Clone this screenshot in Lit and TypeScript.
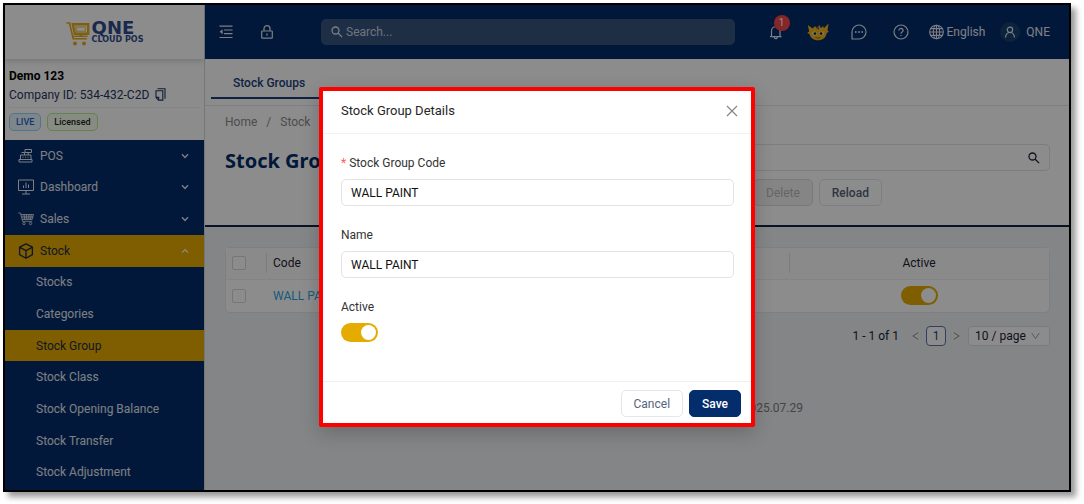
import { LitElement, html, css, svg } from "lit";
import { customElement, property } from "lit/decorators.js";

const icons: Record<string, unknown> = {
  pos: svg`<svg width="15" height="14" viewBox="0 0 15 14" fill="none" stroke="currentColor"><path d="M7 .5h6.500v3H7zM10.200 3.500v2.500M3.500 3.500h3v2.500M2.500 6h10.500v4.500H2.500zM1 10.500h13v2.500H1zM4.500 8.200h1M7 8.200h1M9.500 8.200h1"/></svg>`,
  dashboard: svg`<svg width="16" height="16" viewBox="0 0 16 16" fill="none" stroke="currentColor"><path d="M.5 1v10.500h15V1zM8 11.500V15M4 15h8M5.500 9V6.500M8 9V3.500M10.500 9V5.500"/></svg>`,
  sales: svg`<svg width="16" height="14" viewBox="0 0 16 14" fill="none" stroke="currentColor" stroke-width=".8"><path d="M.3 1h2.200l2 8.300h9.800M3 2.500h12.500l-1.300 5H4.200M3.500 4.200H15M3.900 5.900h10.600M6 2.500l.8 5M8.400 2.500l.3 5M10.800 2.500l-.1 5M13.200 2.500l-.7 5"/><circle cx="6" cy="11.500" r="1.200"/><circle cx="12.500" cy="11.500" r="1.200"/></svg>`,
  stock: svg`<svg width="16" height="16" viewBox="0 0 16 16" fill="none" stroke="currentColor" stroke-width="1.300" stroke-linejoin="round"><path d="M8 .9l6.400 3.300v7.400L8 15.200l-6.400-3.600V4.200zM1.800 4.400L8 7.600l6.200-3.200M8 7.600v7.400"/></svg>`,
  down: svg`<svg width="8" height="6" viewBox="0 0 8 6" fill="none" stroke="currentColor" stroke-width="1.400"><path d="M1 1.200L4 4.400l3-3.200"/></svg>`,
  up: svg`<svg width="8" height="6" viewBox="0 0 8 6" fill="none" stroke="currentColor" stroke-width="1.200"><path d="M1 4.600L4 1.600l3 3"/></svg>`,
  fold: svg`<svg width="14" height="14" viewBox="0 0 14 14" fill="none" stroke="currentColor" stroke-width="1.200"><path d="M.5 1.200h13M5 5h8.500M5 8.700h8.500M.5 12.500h13"/><path d="M3.600 4.300v5L.6 6.800z" fill="currentColor" stroke="none"/></svg>`,
  lock: svg`<svg width="12" height="14" viewBox="0 0 12 14" fill="none" stroke="currentColor" stroke-width="1.200"><rect x=".7" y="6" width="10.600" height="7.200" rx=".6"/><path d="M3 6V3.600a3 3 0 0 1 6 0V6M6 8.600v2.200"/></svg>`,
  search: svg`<svg width="12" height="12" viewBox="0 0 12 12" fill="none" stroke="currentColor" stroke-width="1.300"><circle cx="4.500" cy="4.500" r="3.500"/><path d="M7.200 7.200l3.900 3.900"/></svg>`,
  bell: svg`<svg width="14" height="16" viewBox="0 0 14 16" fill="none" stroke="currentColor" stroke-width="1.200"><path d="M1 12.700h11.500M2.500 12.700V7a4.200 4.200 0 0 1 8.500 0v5.700M6.700 2.800V1.500M5.300 13.200a1.500 1.500 0 0 0 3 0"/></svg>`,
  mascot: svg`<svg width="22" height="18" viewBox="0 0 22 18"><path d="M.8 2l4.700 3.400L8 3.200l2 1.900L12.500 2l1.200 3 2.600-1.800.6 2L21.500.6 20.500 7.300l1.300 1.200-2.200 1.700C19 14.500 15.500 17.300 11 17.300S3.200 14.500 2.500 11L.2 10l2-1.500z" fill="#eeb51c"/><path d="M9 3.300l1.500 2.200 1.800-2.500-.4 3.300H10z" fill="#7a3f6a"/><ellipse cx="7.600" cy="10.600" rx="2.400" ry="2" fill="#f7eccb"/><ellipse cx="14.400" cy="10.600" rx="2.400" ry="2" fill="#f7eccb"/><circle cx="7.900" cy="10.600" r="1.400" fill="#222"/><circle cx="14.100" cy="10.600" r="1.400" fill="#222"/><path d="M8.500 14.400q2.500 1.800 5 0" stroke="#a06a00" fill="none"/></svg>`,
  chat: svg`<svg width="16" height="16" viewBox="0 0 16 16" fill="none" stroke="currentColor" stroke-width="1.200"><path d="M1 15V8a7 7 0 1 1 7 7z"/><g fill="currentColor" stroke="none"><circle cx="4.800" cy="8" r=".9"/><circle cx="8" cy="8" r=".9"/><circle cx="11.200" cy="8" r=".9"/></g></svg>`,
  help: svg`<svg width="16" height="16" viewBox="0 0 16 16" fill="none" stroke="currentColor" stroke-width="1.200"><circle cx="8" cy="8" r="7"/><path d="M5.900 6.400a2.100 2 0 1 1 3.200 1.700C8.300 8.600 8 8.900 8 9.800"/><path d="M8 10.900v1.200" stroke-width="1.300"/></svg>`,
  globe: svg`<svg width="15" height="16" viewBox="0 0 15 16" fill="none" stroke="currentColor" stroke-width="1.100"><circle cx="7.500" cy="8" r="6.800"/><ellipse cx="7.500" cy="8" rx="3.200" ry="6.800"/><path d="M7.500 1.200v13.600M.7 8h13.600M1.600 4.600h11.800M1.600 11.400h11.800"/></svg>`,
  user: svg`<svg width="12" height="12" viewBox="0 0 12 12" fill="none" stroke="currentColor" stroke-width="1.200"><circle cx="6" cy="3.800" r="2.700"/><path d="M1.500 11.500c.3-3 2.200-5 4.500-5s4.200 2 4.500 5"/></svg>`,
  copy: svg`<svg width="11" height="13" viewBox="0 0 11 13" fill="none" stroke="currentColor" stroke-width="1.100"><path d="M2.500.8H10v10M1 2.800h6.800v9.300H3.600L1 9.600zM1 9.400h2.700v2.600"/></svg>`,
  close: svg`<svg width="12" height="12" viewBox="0 0 12 12" fill="none" stroke="currentColor" stroke-width="1.200"><path d="M1 1l10 10M11 1L1 11"/></svg>`,
  prev: svg`<svg width="7" height="8" viewBox="0 0 7 8" fill="none" stroke="currentColor"><path d="M6.200.6L.9 4l5.300 3.400"/></svg>`,
  next: svg`<svg width="7" height="8" viewBox="0 0 7 8" fill="none" stroke="currentColor"><path d="M.8.6L6.100 4 .8 7.400"/></svg>`,
  caret: svg`<svg width="9" height="8" viewBox="0 0 9 8" fill="none" stroke="currentColor"><path d="M.7 1L4.500 6.600 8.300 1"/></svg>`,
  logo: svg`<svg width="24" height="26" viewBox="0 0 24 26" fill="none" stroke="#e6ab1c"><path d="M.5 2h3l3.700 15.800h13.600" stroke-width="1.600"/><path d="M6.800 3.200h15.400v9.600H8.800z" stroke-width="2.400"/><path d="M9.800 6h9.600v4.600h-8.600z" stroke="#f0cf78" stroke-width="1.600"/><path d="M7.200 15.300h14.300" stroke-width="1.400"/><path d="M14.800 13v3" stroke-width="3"/><g fill="#e6ab1c" stroke="none"><circle cx="9" cy="22.500" r="2"/><circle cx="18" cy="22.500" r="2"/></g></svg>`,
};

const shared = css`
  * { box-sizing: border-box; }
  svg { display: block; flex: none; }
  button, input, select { font: inherit; color: inherit; margin: 0; }
  button { background: none; border: 0; padding: 0; display: flex; align-items: center; justify-content: center; cursor: pointer; }
  a { color: inherit; text-decoration: none; }
  .switch { appearance: none; display: block; width: 37px; height: 19px; border-radius: 10px; background: #e6ab00; padding: 2px; cursor: pointer; }
  .switch::before { content: ""; display: block; width: 15px; height: 15px; border-radius: 50%; background: #fff; }
  .switch:checked::before { margin-left: auto; }
  .btn { height: 27px; border: 1px solid #e1e6ef; border-radius: 5px; background: #fff; color: #56637a; }
`;

@customElement("side-menu")
class SideMenu extends LitElement {
  @property({ attribute: false }) groups = [
    { icon: "pos", label: "POS" },
    { icon: "dashboard", label: "Dashboard" },
    { icon: "sales", label: "Sales" },
    { icon: "stock", label: "Stock", open: true },
  ];
  @property({ attribute: false }) items = [
    "Stocks", "Categories", "Stock Group", "Stock Class",
    "Stock Opening Balance", "Stock Transfer", "Stock Adjustment",
  ];
  @property() current = "Stock Group";

  static styles = [shared, css`
    :host { display: flex; flex-direction: column; width: 200px; flex: none; border-right: 1px solid #d5d8de; background: #fff; }
    .brand { height: 54px; display: flex; align-items: center; justify-content: center; gap: 2px; box-shadow: 0 2px 6px rgba(0, 0, 0, .18); font-family: "DejaVu Sans", sans-serif; font-weight: 700; color: #2f4c8e; }
    .brand svg { margin-top: 4px; }
    .name { font-size: 18px; line-height: 16px; }
    .sub { font-size: 8px; line-height: 8px; }
    .company { height: 81px; padding: 9px 4px 0; line-height: 18px; }
    .company h2 { margin: 0; font-size: 12px; font-weight: 700; line-height: 16px; color: #000; }
    .id { display: flex; gap: 6px; height: 24px; align-items: center; color: #1f3763; border-bottom: 1px solid #eceef1; padding-bottom: 2px; }
    .tags { display: flex; gap: 6px; padding-top: 5px; font-size: 9px; line-height: 16px; font-weight: 500; }
    .tag { border: 1px solid #91d5ff; background: #e6f4ff; color: #1768c4; border-radius: 5px; padding: 0 6px; }
    .tag.ok { border-color: #b7eb8f; background: #f6ffed; color: #222; }
    nav { flex: 1; display: grid; grid-auto-rows: 1fr; background: #032d6b; color: #e4e8f0; padding-bottom: 2px; }
    .group { display: grid; grid-template-columns: 22px 1fr 8px; justify-items: start; padding: 0 15px 0 13px; text-align: left; }
    .open, .item.current { background: #e6ab00; color: #1d2b45; }
    .open .arrow { color: #fff; }
    .item { display: flex; align-items: center; padding-left: 31px; }
  `];

  render() {
    return html`
      <div class="brand">${icons.logo}<div><div class="name">QNE</div><div class="sub">CLOUD POS</div></div></div>
      <div class="company">
        <h2>Demo 123</h2>
        <div class="id">Company ID: 534-432-C2D <button aria-label="Copy">${icons.copy}</button></div>
        <div class="tags"><span class="tag">LIVE</span><span class="tag ok">Licensed</span></div>
      </div>
      <nav>
        ${this.groups.map((g) => html`<button class="group ${g.open ? "open" : ""}">${icons[g.icon]}<span>${g.label}</span><span class="arrow">${g.open ? icons.up : icons.down}</span></button>`)}
        ${this.items.map((i) => html`<a href="#" class="item ${i === this.current ? "current" : ""}">${i}</a>`)}
      </nav>`;
  }
}

@customElement("top-bar")
class TopBar extends LitElement {
  static styles = [shared, css`
    :host { display: flex; align-items: center; height: 54px; padding: 0 19px 0 14px; background: #032d6b; color: #e4e8f0; }
    .lock { margin: 0 48px 0 28px; }
    .search { flex: 1; display: flex; align-items: center; gap: 3px; height: 26px; padding: 0 10px; border-radius: 5px; background: #35547f; }
    .search input { flex: 1; min-width: 0; background: none; border: 0; padding: 0; outline: 0; }
    .search input::placeholder { color: #cdd5e2; opacity: 1; }
    .bell { position: relative; margin: 0 24px 0 34px; }
    .badge { position: absolute; left: 5px; top: -9px; width: 16px; height: 16px; border-radius: 50%; background: #f5454a; color: #fff; font-size: 10px; line-height: 16px; }
    .mascot { margin-right: 22px; }
    .help { margin: 0 20px 0 26px; }
    .lang { gap: 3px; margin-right: 15px; }
    .account { gap: 6px; }
    .avatar { width: 20px; height: 20px; border-radius: 50%; background: #17406f; display: flex; align-items: center; justify-content: center; }
  `];

  render() {
    return html`
      <button aria-label="Collapse menu">${icons.fold}</button>
      <button class="lock" aria-label="Lock">${icons.lock}</button>
      <label class="search">${icons.search}<input type="text" placeholder="Search..." aria-label="Search" /></label>
      <button class="bell" aria-label="Notifications">${icons.bell}<span class="badge">1</span></button>
      <button class="mascot" aria-label="Assistant">${icons.mascot}</button>
      <button aria-label="Chat">${icons.chat}</button>
      <button class="help" aria-label="Help">${icons.help}</button>
      <button class="lang">${icons.globe}English</button>
      <button class="account"><span class="avatar">${icons.user}</span>QNE</button>`;
  }
}

@customElement("stock-groups-page")
class StockGroupsPage extends LitElement {
  static styles = [shared, css`
    :host { flex: 1; display: flex; flex-direction: column; background: #f0f2f5; color: #1c2333; }
    .tabs { height: 47px; padding: 8px 6px 0; display: flex; align-items: start; background: #fff; border-bottom: 1px solid #e6e8ec; }
    .tab { height: 32px; padding: 2px 22px 0; border-bottom: 2px solid #1c3f7c; color: #1c3f7c; font-weight: 500; display: flex; align-items: center; }
    .head { display: flex; justify-content: space-between; height: 121px; padding: 7px 19px 0 20px; background: #fff; border-bottom: 2px solid #14233f; }
    .crumbs { display: flex; gap: 9px; line-height: 18px; color: #8c8c8c; }
    h1 { margin: 16px 0 0; font: 700 20px/27px "Noto Sans", sans-serif; color: #032d6b; }
    .tools { padding-top: 31px; width: 400px; }
    .find { display: flex; align-items: center; height: 27px; border: 1px solid #e1e3e8; border-radius: 5px; padding: 0 9px; }
    .find input { flex: 1; min-width: 0; border: 0; background: none; }
    .actions { display: flex; gap: 6px; margin: 8px 0 0 103px; }
    .actions .btn { padding: 0 12px; font-weight: 500; }
    .actions .btn:disabled { background: #f2f2f2; border-color: #dcdcdc; color: #b9b9b9; font-weight: 400; }
    .card { margin: 20px 19px 0 20px; border: 1px solid #e6e8ec; border-radius: 5px; background: #fff; }
    table { width: 100%; border-collapse: collapse; table-layout: fixed; }
    th { font-weight: 400; height: 31px; padding: 0; background: #fcfcfc; }
    td { height: 33px; padding: 0; border-top: 1px solid #eceef1; }
    .check { width: 40px; padding-left: 6px; text-align: left; }
    .check input { appearance: none; display: block; width: 14px; height: 14px; border: 1px solid #d5d8de; border-radius: 2px; background: #fff; }
    .code { text-align: left; padding-left: 7px; }
    .active { width: 260px; text-align: center; }
    .active .switch { margin: 0 auto; }
    th.code, th.active { background-image: linear-gradient(#dfe1e5, #dfe1e5); background-size: 1px 20px; background-repeat: no-repeat; background-position: 0 50%; }
    td.code { color: #2aa6e0; }
    .pages { display: flex; justify-content: flex-end; align-items: center; margin: 13px 19px 0 0; height: 20px; }
    .arrow { color: #8c8c8c; width: 7px; }
    .total { margin-right: 13px; }
    .page { width: 20px; height: 20px; margin: 0 7px; border: 1px solid #5674a8; border-radius: 4px; background: #fff; color: #1c3f7c; }
    .size { display: flex; align-items: center; width: 82px; margin-left: 8px; padding: 0 9px 0 6px; height: 20px; border: 1px solid #dfe1e5; border-radius: 4px; background: #fff; }
    .size select { appearance: none; border: 0; background: none; padding: 0; flex: 1; min-width: 0; }
    .size svg { color: #a3a3a3; }
    footer { margin-top: 53px; padding-right: 266px; text-align: right; line-height: 18px; color: #7d7d80; }
  `];

  render() {
    return html`
      <div class="tabs"><a href="#" class="tab">Stock Groups</a></div>
      <div class="head">
        <div>
          <div class="crumbs"><a href="#">Home</a><span>/</span><a href="#">Stock</a></div>
          <h1>Stock Groups</h1>
        </div>
        <div class="tools">
          <label class="find"><input type="text" aria-label="Search stock groups" />${icons.search}</label>
          <div class="actions"><button class="btn" disabled>Delete</button><button class="btn">Reload</button></div>
        </div>
      </div>
      <div class="card">
        <table>
          <thead><tr><th class="check"><input type="checkbox" aria-label="Select all" /></th><th class="code">Code</th><th class="active">Active</th></tr></thead>
          <tbody><tr><td class="check"><input type="checkbox" aria-label="Select row" /></td><td class="code"><a href="#">WALL PAINT</a></td><td class="active"><input class="switch" type="checkbox" aria-label="Active" checked /></td></tr></tbody>
        </table>
      </div>
      <div class="pages">
        <span class="total">1 - 1 of 1</span>
        <button class="arrow" aria-label="Previous page">${icons.prev}</button>
        <button class="page">1</button>
        <button class="arrow" aria-label="Next page">${icons.next}</button>
        <label class="size"><select aria-label="Page size"><option>10 / page</option></select>${icons.caret}</label>
      </div>
      <footer>2025.07.29</footer>`;
  }
}

@customElement("group-dialog")
class GroupDialog extends LitElement {
  static styles = [shared, css`
    :host { display: block; width: 436px; border: 4px solid #fe0000; border-radius: 2px; background: #fff; color: #333; box-shadow: 0 6px 18px rgba(0, 0, 0, .2); }
    header { display: flex; align-items: center; justify-content: space-between; height: 43px; padding: 0 13px 2px 18px; border-bottom: 1px solid #f2f2f2; }
    h2 { margin: 0; font-size: 13px; line-height: 20px; font-weight: 400; color: #262626; }
    header button { color: #858585; }
    form { display: grid; gap: 20px; padding: 20px 17px 39px 18px; }
    .field { display: grid; gap: 7px; }
    label { line-height: 18px; }
    .required { color: #ff5c5c; margin-right: 3px; }
    .text { width: 100%; height: 27px; border: 1px solid #e3e3e3; border-radius: 5px; padding: 0 9px; color: #111; background: #fff; }
    footer { display: flex; justify-content: flex-end; gap: 6px; padding: 8px 10px 6px; border-top: 1px solid #f0f0f0; }
    .btn { padding: 0 12px; }
    .save { background: #032d6b; border-color: #032d6b; color: #fff; font-weight: 500; }
  `];

  render() {
    return html`
      <header><h2>Stock Group Details</h2><button aria-label="Close">${icons.close}</button></header>
      <form>
        <div class="field"><label for="code"><span class="required">*</span>Stock Group Code</label><input class="text" id="code" type="text" value="WALL PAINT" /></div>
        <div class="field"><label for="name">Name</label><input class="text" id="name" type="text" value="WALL PAINT" /></div>
        <div class="field"><label for="active">Active</label><input class="switch" id="active" type="checkbox" checked /></div>
      </form>
      <footer><button class="btn">Cancel</button><button class="btn save">Save</button></footer>`;
  }
}

@customElement("app-root")
class AppRoot extends LitElement {
  static styles = css`
    * { box-sizing: border-box; }
    :host { display: flex; min-height: 100vh; box-sizing: border-box; padding: 3px 13px 12px 3px; background: #fff; font: 400 12px/18px Roboto, sans-serif; }
    .window { position: relative; flex: 1; display: flex; border: 2px solid #000; box-shadow: 5px 5px 6px rgba(0, 0, 0, .4); }
    .main { flex: 1; min-width: 0; display: flex; flex-direction: column; }
    .mask { position: absolute; inset: 0; display: flex; justify-content: center; align-items: flex-start; padding-top: 82px; background: rgba(0, 0, 0, .45); }
  `;

  render() {
    return html`
      <div class="window">
        <side-menu></side-menu>
        <div class="main"><top-bar></top-bar><stock-groups-page></stock-groups-page></div>
        <div class="mask"><group-dialog role="dialog" aria-modal="true" aria-label="Stock Group Details"></group-dialog></div>
      </div>`;
  }
}
